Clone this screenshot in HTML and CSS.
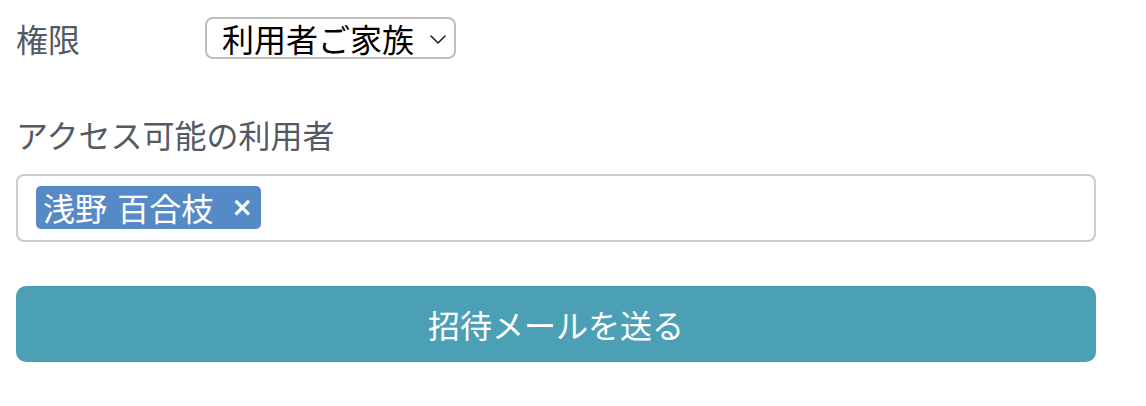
FILE: index.html
```html
<!DOCTYPE html>
<html lang="ja">
<head>
<meta charset="utf-8">
<title>招待</title>
<link rel="stylesheet" href="styles.css">
</head>
<body>
<form class="invite">
  <div class="row">
    <label class="row-label" for="role">権限</label>
    <div class="select-wrap">
      <select id="role" class="select">
        <option>利用者ご家族</option>
      </select>
      <svg class="chevron" width="16" height="9" viewBox="0 0 16 9" aria-hidden="true">
        <path d="M1 1 L8 8 L15 1" fill="none" stroke="#222" stroke-width="1.6" stroke-linecap="round" stroke-linejoin="round"/>
      </svg>
    </div>
  </div>

  <div class="field-label">アクセス可能の利用者</div>
  <div class="tag-input">
    <span class="tag"><span class="tag-text">浅野 百合枝</span><span class="tag-x">×</span></span>
  </div>

  <button type="button" class="submit">招待メールを送る</button>
</form>
</body>
</html>
```

FILE: styles.css
```css
* { box-sizing: border-box; }

html, body {
  margin: 0;
  padding: 0;
  background: #fff;
}

body {
  font-family: "Noto Sans CJK JP", "Noto Sans", sans-serif;
  font-size: 32px;
  color: #525a64;
}

.invite {
  width: 1112px;
  padding: 17px 16px;
}

.row {
  display: flex;
  align-items: center;
  height: 42px;
}

.row-label {
  width: 189px;
  line-height: 42px;
  color: #525a64;
}

.select-wrap {
  position: relative;
  width: 251px;
  height: 42px;
  line-height: 42px;
}

.select {
  display: block;
  appearance: none;
  -webkit-appearance: none;
  width: 100%;
  height: 42px;
  margin: 0;
  padding: 0 0 0 15px;
  border: 2px solid #bdbdbd;
  border-radius: 8px;
  background: #fff;
  font-family: inherit;
  font-size: 32px;
  line-height: 38px;
  color: #000;
}

.chevron {
  position: absolute;
  left: 225px;
  top: 18px;
  pointer-events: none;
}

.field-label {
  margin-top: 51px;
  height: 48px;
  line-height: 48px;
}

.tag-input {
  margin-top: 16px;
  height: 68px;
  border: 2px solid #cccccc;
  border-radius: 8px;
  padding: 10px 18px;
  display: flex;
  align-items: flex-start;
}

.tag {
  display: inline-flex;
  align-items: center;
  height: 43px;
  padding: 0 8px 0 7px;
  background: #568ac6;
  border-radius: 5px;
  color: #fff;
}

.tag-text {
  line-height: 43px;
  word-spacing: 3px;
}

.tag-x {
  margin-left: 18px;
  font-family: "DejaVu Sans", sans-serif;
  font-weight: bold;
  font-size: 26px;
  line-height: 43px;
}

.submit {
  display: block;
  width: 100%;
  height: 76px;
  margin-top: 44px;
  border: none;
  border-radius: 10px;
  background: #4ba0b6;
  color: #fff;
  font-family: inherit;
  font-size: 32px;
  padding: 0;
}
```
